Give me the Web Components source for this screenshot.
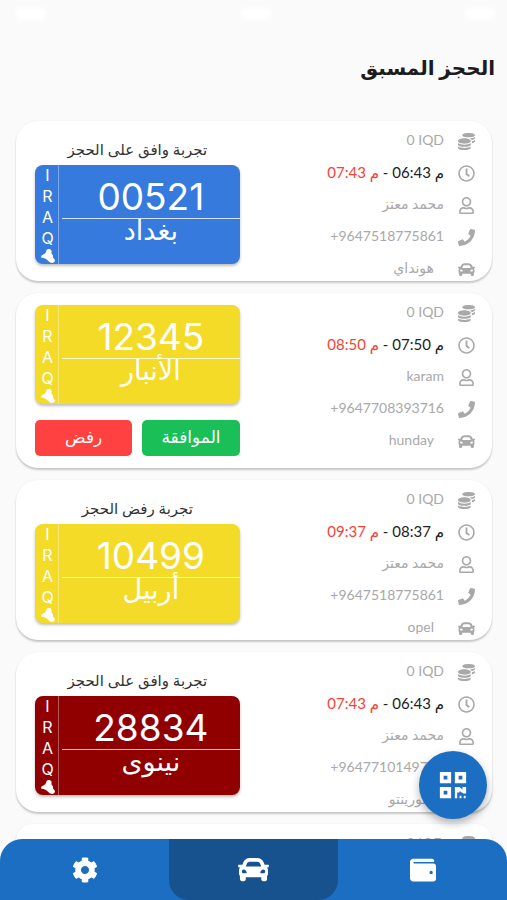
<!DOCTYPE html>
<html lang="ar" dir="rtl">
<head>
<meta charset="utf-8">
<meta name="viewport" content="width=device-width, initial-scale=1">
<title>الحجز المسبق</title>
<style>
html, body {
  margin: 0;
  height: 100%;
}

body {
  overflow: hidden;
  background: #fafafa;
  font-family: Lato, "DejaVu Sans", sans-serif;
}
</style>
</head>
<body>
<booking-app></booking-app>

<script>
const ICONS = {
  coins: ['0 0 512 512', 'M0 405.3V448c0 35.3 86 64 192 64s192-28.7 192-64v-42.7C342.7 434.4 267.2 448 192 448S41.3 434.4 0 405.3zM320 128c106 0 192-28.7 192-64S426 0 320 0 128 28.7 128 64s86 64 192 64zM0 300.4V352c0 35.3 86 64 192 64s192-28.7 192-64v-51.6c-41.3 34-116.9 51.6-192 51.6S41.3 334.4 0 300.4zm416 11c57.3-11.1 96-31.7 96-55.4v-42.7c-23.2 16.4-57.3 27.6-96 34.5v63.6zM192 160C86 160 0 195.8 0 240s86 80 192 80 192-35.8 192-80-86-80-192-80zm219.3 56.3c60-10.8 100.7-32 100.7-56.3v-42.7c-35.5 25.1-96.5 38.6-160.7 41.8 29.5 14.3 51.2 33.5 60 57.2z'],
  clock: ['0 0 512 512', 'M256 8C119 8 8 119 8 256s111 248 248 248 248-111 248-248S393 8 256 8zm0 448c-110.5 0-200-89.5-200-200S145.5 56 256 56s200 89.5 200 200-89.5 200-200 200zm61.8-104.4l-84.9-61.7c-3.1-2.3-4.9-5.9-4.9-9.7V116c0-6.6 5.4-12 12-12h32c6.6 0 12 5.4 12 12v141.7l66.8 48.6c5.4 3.9 6.5 11.4 2.6 16.8L334.6 349c-3.9 5.3-11.4 6.5-16.8 2.6z'],
  user: ['0 0 448 512', 'M313.6 304c-28.7 0-42.5 16-89.6 16-47.1 0-60.8-16-89.6-16C60.2 304 0 364.2 0 438.4V464c0 26.5 21.5 48 48 48h352c26.5 0 48-21.5 48-48v-25.6c0-74.2-60.2-134.4-134.4-134.4zM400 464H48v-25.6c0-47.6 38.8-86.4 86.4-86.4 14.6 0 38.3 16 89.6 16 51.7 0 74.9-16 89.6-16 47.6 0 86.4 38.8 86.4 86.4V464zM224 288c79.5 0 144-64.5 144-144S303.5 0 224 0 80 64.5 80 144s64.5 144 144 144zm0-240c52.9 0 96 43.1 96 96s-43.1 96-96 96-96-43.1-96-96 43.1-96 96-96z'],
  phone: ['0 0 512 512', 'M493.4 24.6l-104-24c-11.3-2.6-22.9 3.3-27.5 13.9l-48 112c-4.2 9.8-1.4 21.3 6.9 28l60.6 49.6c-36 76.7-98.9 140.5-177.2 177.2l-49.6-60.6c-6.8-8.3-18.2-11.1-28-6.9l-112 48C3.9 366.5-2 378.1.6 389.4l24 104C27.1 504.2 36.7 512 48 512c256.1 0 464-207.5 464-464 0-11.2-7.7-20.9-18.6-23.4z'],
  car: ['0 0 512 512', 'M499.99 176h-59.87l-16.64-41.6C406.38 91.63 365.57 64 319.5 64h-127c-46.06 0-86.88 27.63-103.99 70.4L71.87 176H12.01C4.2 176-1.53 183.34.37 190.91l6 24C7.7 220.25 12.5 224 18.01 224h20.07C24.65 235.73 16 252.78 16 272v48c0 16.12 6.16 30.67 16 41.93V416c0 17.67 14.33 32 32 32h32c17.67 0 32-14.33 32-32v-32h256v32c0 17.67 14.33 32 32 32h32c17.67 0 32-14.33 32-32v-54.07c9.84-11.25 16-25.8 16-41.93v-48c0-19.22-8.65-36.27-22.07-48H494c5.51 0 10.31-3.75 11.64-9.09l6-24c1.89-7.57-3.84-14.91-11.65-14.91zm-352.06-17.83c7.29-18.22 24.94-30.17 44.57-30.17h127c19.63 0 37.28 11.95 44.57 30.17L384 208H128l19.93-49.83zM96 319.8c-19.2 0-32-12.76-32-31.9S76.8 256 96 256s48 28.71 48 47.85-28.8 15.95-48 15.95zm320 0c-19.2 0-48 3.19-48-15.95S396.8 256 416 256s32 12.76 32 31.9-12.8 31.9-32 31.9z'],
  cog: ['0 0 512 512', 'M487.4 315.7l-42.6-24.6c4.3-23.2 4.3-47 0-70.2l42.6-24.6c4.9-2.8 7.1-8.6 5.5-14-11.1-35.6-30-67.8-54.7-94.6-3.8-4.1-10-5.1-14.8-2.3L380.8 110c-17.9-15.4-38.5-27.3-60.8-35.1V25.8c0-5.6-3.9-10.5-9.4-11.7-36.7-8.2-74.3-7.8-109.2 0-5.5 1.2-9.4 6.1-9.4 11.7V75c-22.2 7.9-42.8 19.8-60.8 35.1L88.7 85.5c-4.9-2.8-11-1.9-14.8 2.3-24.7 26.7-43.6 58.9-54.7 94.6-1.7 5.4.6 11.2 5.5 14L67.3 221c-4.3 23.2-4.3 47 0 70.2l-42.6 24.6c-4.9 2.8-7.1 8.6-5.5 14 11.1 35.6 30 67.8 54.7 94.6 3.8 4.1 10 5.1 14.8 2.3l42.6-24.6c17.9 15.4 38.5 27.3 60.8 35.1v49.2c0 5.6 3.9 10.5 9.4 11.7 36.7 8.2 74.3 7.8 109.2 0 5.5-1.2 9.4-6.1 9.4-11.7v-49.2c22.2-7.9 42.8-19.8 60.8-35.1l42.6 24.6c4.9 2.8 11 1.9 14.8-2.3 24.7-26.7 43.6-58.9 54.7-94.6 1.5-5.5-.7-11.3-5.6-14.1zM256 336c-44.1 0-80-35.9-80-80s35.9-80 80-80 80 35.9 80 80-35.9 80-80 80z'],
  wallet: ['0 0 512 512', 'M461.2 128H80c-8.84 0-16-7.16-16-16s7.16-16 16-16h384c8.84 0 16-7.16 16-16 0-26.51-21.49-48-48-48H64C28.65 32 0 60.65 0 96v320c0 35.35 28.65 64 64 64h397.2c28.02 0 50.8-21.53 50.8-48V176c0-26.47-22.78-48-50.8-48zM416 336c-17.67 0-32-14.33-32-32s14.33-32 32-32 32 14.33 32 32-14.33 32-32 32z'],
  qrcode: ['0 0 448 512', 'M0 224h192V32H0v192zM64 96h64v64H64V96zm192-64v192h192V32H256zm128 128h-64V96h64v64zM0 480h192V288H0v192zm64-128h64v64H64v-64zM256 288h80l48 48V288h64v112h-48l-64-40v24h-40v96h-40zM336 440h32v40h-32zm72 0h32v40h-32z'],
  iraq: ['0 0 28 28', 'M11 2l3-2h4l3 3v6l3 4v4l4 5-1 4-4 2-5-1-8-7-5-2-5-1 1-4 7-4 2-3z']
};

class AppIcon extends HTMLElement {
  constructor() {
    super();
    this.attachShadow({ mode: 'open' });
  }

  connectedCallback() {
    const [viewBox, path] = ICONS[this.getAttribute('name')];
    this.shadowRoot.innerHTML = `
<style>
:host {
  display: block;
  flex: none;
  width: var(--icon-size, 17px);
  height: var(--icon-size, 17px);
}

svg {
  display: block;
  width: 100%;
  height: 100%;
  fill: currentColor;
}
</style>
<svg viewBox="${viewBox}" aria-hidden="true"><path d="${path}"/></svg>
`;
  }
}

// Row with an icon on the leading side and slotted text after it
const infoTemplate = document.createElement('template');

infoTemplate.innerHTML = `
<style>
:host {
  display: flex;
  align-items: center;
  gap: 14px;
  height: 24px;
  color: #a9a9a9;
  font-size: 14px;
  line-height: 24px;
  white-space: nowrap;
}

:host([inset]) .text {
  padding-inline-start: 10px;
}

:host([strong]) {
  font-size: 15px;
}

.icon {
  padding-top: 2px;
}
</style>
<div class="icon"></div>
<div class="text"><slot></slot></div>
`;

class InfoRow extends HTMLElement {
  constructor() {
    super();
    this.attachShadow({ mode: 'open' });
    this.shadowRoot.appendChild(infoTemplate.content.cloneNode(true));
  }

  connectedCallback() {
    const icon = document.createElement('app-icon');
    icon.setAttribute('name', this.getAttribute('icon'));
    this.shadowRoot.querySelector('.icon').replaceChildren(icon);
  }
}

const plateTemplate = document.createElement('template');

plateTemplate.innerHTML = `
<style>
:host {
  display: grid;
  grid-template-columns: 24px 1fr;
  direction: ltr;
  height: 99px;
  border-radius: 8px;
  background: var(--plate-color, #357adc);
  box-shadow: 0 2px 3px rgba(0, 0, 0, .25);
  color: #fff;
  font-family: Inter, "DejaVu Sans", sans-serif;
}

.country {
  display: flex;
  flex-direction: column;
  align-items: center;
  border-right: 1px solid rgba(255, 255, 255, .35);
  font-size: 16px;
  line-height: 21px;
  padding-left: 2px;
  --icon-size: 14px;
}

.main {
  display: grid;
  grid-template-rows: 54px 1fr;
  margin-left: 3px;
  text-align: center;
}

.number {
  border-bottom: 1px solid rgba(255, 255, 255, .8);
  font-size: 37px;
  line-height: 64px;
  height: 53px;
}

.city {
  font-size: 27px;
  line-height: 24px;
}
</style>
<div class="country">
  <span>I</span><span>R</span><span>A</span><span>Q</span>
  <app-icon name="iraq"></app-icon>
</div>
<div class="main">
  <div class="number"><slot name="number"></slot></div>
  <div class="city" dir="rtl"><slot name="city"></slot></div>
</div>
`;

class PlateNumber extends HTMLElement {
  constructor() {
    super();
    this.attachShadow({ mode: 'open' });
    this.shadowRoot.appendChild(plateTemplate.content.cloneNode(true));
  }
}

const cardTemplate = document.createElement('template');

cardTemplate.innerHTML = `
<style>
:host {
  display: flex;
  justify-content: space-between;
  align-items: flex-start;
  border-radius: 22px;
  background: #fff;
  box-shadow: 0 2px 2px rgba(0, 0, 0, .2), 0 0 2px rgba(0, 0, 0, .06);
}

.info {
  display: grid;
  gap: 8px;
  padding: 7px 17px 1px 0;
}

.side {
  box-sizing: border-box;
  width: 43%;
  margin-left: 19px;
  padding: 12px 0;
}

.note {
  color: #333;
  font-size: 15px;
  line-height: 32px;
  text-align: center;
  white-space: nowrap;
}

.actions {
  display: grid;
  grid-template-columns: 1fr 1fr;
  gap: 10px;
  margin-top: 16px;
}

.note:empty, .actions[hidden] {
  display: none;
}

button {
  height: 36px;
  padding: 0 0 4px;
  border: 0;
  border-radius: 5px;
  color: #fff;
  font: inherit;
  font-size: 17px;
}

.accept {
  background: #1bbf58;
}

.reject {
  background: #ff4141;
}
</style>
<div class="info"><slot></slot></div>
<div class="side">
  <div class="note"></div>
  <slot name="plate"></slot>
  <div class="actions" hidden>
    <button class="accept" type="button">الموافقة</button>
    <button class="reject" type="button">رفض</button>
  </div>
</div>
`;

class BookingCard extends HTMLElement {
  constructor() {
    super();
    this.attachShadow({ mode: 'open' });
    this.shadowRoot.appendChild(cardTemplate.content.cloneNode(true));
  }

  connectedCallback() {
    this.shadowRoot.querySelector('.note').textContent = this.getAttribute('note') || '';
    this.shadowRoot.querySelector('.actions').hidden = !this.hasAttribute('pending');
  }
}

const navTemplate = document.createElement('template');

navTemplate.innerHTML = `
<style>
:host {
  display: block;
}

nav {
  display: grid;
  grid-template-columns: repeat(3, 1fr);
  height: 61px;
  overflow: hidden;
  border-radius: 22px 22px 0 0;
  background: #1b6ec2;
}

a {
  display: grid;
  place-items: center;
  color: #fff;
  --icon-size: 26px;
}

a[aria-current] {
  border-radius: 0 0 20px 20px;
  background: #17528f;
  --icon-size: 31px;
}
</style>
<nav>
  <a href="#wallet" aria-label="المحفظة"><app-icon name="wallet"></app-icon></a>
  <a href="#bookings" aria-label="الحجوزات" aria-current="page"><app-icon name="car"></app-icon></a>
  <a href="#settings" aria-label="الإعدادات"><app-icon name="cog"></app-icon></a>
</nav>
`;

class BottomNav extends HTMLElement {
  constructor() {
    super();
    this.attachShadow({ mode: 'open' });
    this.shadowRoot.appendChild(navTemplate.content.cloneNode(true));
  }
}

const BLUE = '#357adc';
const YELLOW = '#f3db28';
const RED = '#900000';

const bookings = [
  { note: 'تجربة وافق على الحجز', from: '06:43', to: '07:43', name: 'محمد معتز', phone: '+9647518775861', car: 'هونداي', number: '00521', city: 'بغداد', color: BLUE },
  { pending: true, from: '07:50', to: '08:50', name: 'karam', phone: '+9647708393716', car: 'hunday', number: '12345', city: 'الأنبار', color: YELLOW },
  { note: 'تجربة رفض الحجز', from: '08:37', to: '09:37', name: 'محمد معتز', phone: '+9647518775861', car: 'opel', number: '10499', city: 'أربيل', color: YELLOW },
  { note: 'تجربة وافق على الحجز', from: '06:43', to: '07:43', name: 'محمد معتز', phone: '+9647710149775', car: 'سورينتو', number: '28834', city: 'نينوى', color: RED },
  {}
];

// Bookings without a plate show their price only
function renderBooking(b) {
  const details = b.number ? `
  <info-row icon="clock" strong><span class="from">م ${b.from} - </span><span class="to">م ${b.to}</span></info-row>
  <info-row icon="user">${b.name}</info-row>
  <info-row icon="phone"><bdi dir="ltr">${b.phone}</bdi></info-row>
  <info-row icon="car" inset>${b.car}</info-row>
  <plate-number slot="plate" style="--plate-color: ${b.color}">
    <span slot="number">${b.number}</span>
    <span slot="city">${b.city}</span>
  </plate-number>` : '';

  return `
<booking-card ${b.note ? `note="${b.note}"` : ''} ${b.pending ? 'pending' : ''}>
  <info-row icon="coins"><bdi dir="ltr">0 IQD</bdi></info-row>${details}
</booking-card>`;
}

class BookingApp extends HTMLElement {
  constructor() {
    super();
    this.attachShadow({ mode: 'open' });
    this.shadowRoot.innerHTML = `
<style>
:host {
  display: block;
  position: relative;
  height: 100vh;
  overflow: hidden;
}

.status {
  display: flex;
  justify-content: space-between;
  height: 20px;
  padding: 0 12px 0 16px;
  align-items: flex-end;
}

.status i {
  width: 30px;
  height: 12px;
  border-radius: 4px;
  background: #fff;
  filter: blur(2px);
}

h1 {
  margin: 0;
  padding: 28px 12px 34px;
  color: #1c1c1e;
  font-size: 20px;
  font-weight: 700;
  line-height: 39px;
}

.list {
  display: grid;
  gap: 12px;
  padding: 0 15px 0 16px;
}

.from {
  color: #222;
}

.to {
  color: #f44336;
}

bottom-nav {
  position: absolute;
  inset: auto 0 0;
}

.scan {
  position: absolute;
  right: 20px;
  bottom: 81px;
  display: grid;
  place-items: center;
  width: 68px;
  height: 68px;
  padding: 0;
  border: 0;
  border-radius: 50%;
  background: #1b6ec2;
  box-shadow: 0 4px 8px rgba(0, 0, 0, .3);
  color: #fff;
  --icon-size: 30px;
}
</style>
<div class="status"><i></i><i></i><i></i></div>
<h1>الحجز المسبق</h1>
<main class="list">${bookings.map(renderBooking).join('')}</main>
<bottom-nav></bottom-nav>
<button class="scan" type="button" aria-label="مسح الرمز"><app-icon name="qrcode"></app-icon></button>
`;
  }
}

customElements.define('app-icon', AppIcon);
customElements.define('info-row', InfoRow);
customElements.define('plate-number', PlateNumber);
customElements.define('booking-card', BookingCard);
customElements.define('bottom-nav', BottomNav);
customElements.define('booking-app', BookingApp);
</script>
</body>
</html>
